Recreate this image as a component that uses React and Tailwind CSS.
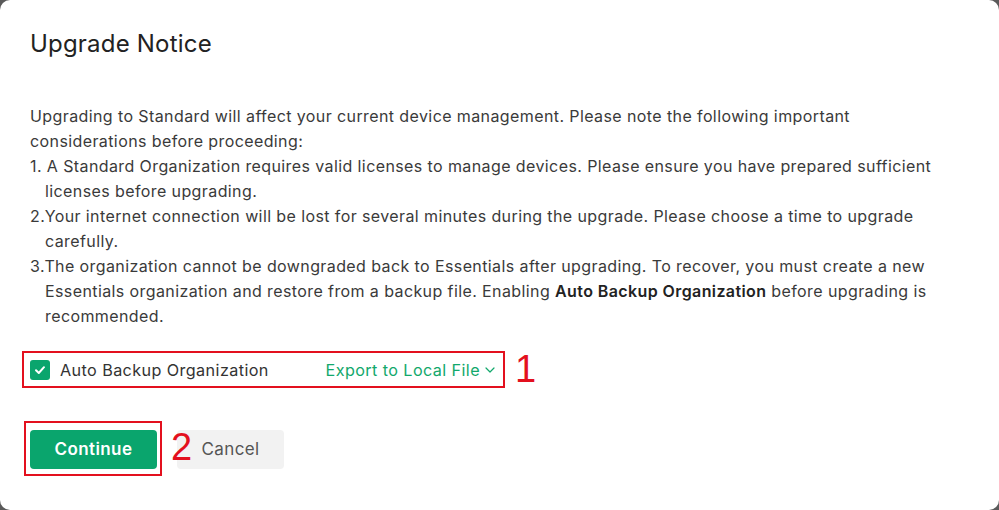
import React from "react";

export default function App() {
  const font = { fontFamily: 'Inter, "Noto Sans", sans-serif' };
  return (
    <div className="w-[999px] h-[510px] bg-[#5a5a5a] tracking-[0.4px]" style={font}>
      <div className="w-full h-full bg-white rounded-[10px] px-[30px] pt-[28px] flex flex-col">
        <h1 className="text-[24px] leading-[32px] text-[#222] font-normal tracking-[0.2px]">Upgrade Notice</h1>
        <div className="mt-[44px] text-[16px] leading-[25px] text-[#3a3a3a]">
          <p>
            Upgrading to Standard will affect your current device management. Please note the following important
            considerations before proceeding:
          </p>
          <p className="pl-[15px] -indent-[15px]">
            1. A Standard Organization requires valid licenses to manage devices. Please ensure you have prepared sufficient licenses before upgrading.
          </p>
          <p className="pl-[15px] -indent-[15px]">
            2.Your internet connection will be lost for several minutes during the upgrade. Please choose a time to upgrade carefully.
          </p>
          <p className="pl-[15px] -indent-[15px]">
            3.The organization cannot be downgraded back to Essentials after upgrading. To recover, you must create a new Essentials organization and restore from a backup file. Enabling{" "}
            <span className="font-semibold text-[#222]">Auto Backup Organization</span> before upgrading is recommended.
          </p>
        </div>

        <div className="relative mt-[29px] w-[465px] h-[24px] flex items-center justify-between">
          <div className="flex items-center gap-[10px]">
            <span className="w-[20px] h-[20px] rounded-[3px] bg-[#0aa56d] flex items-center justify-center">
              <svg width="12" height="12" viewBox="0 0 12 12" fill="none">
                <path d="M2 6.2 L4.8 9 L10 3.2" stroke="white" strokeWidth="2" strokeLinecap="round" strokeLinejoin="round" />
              </svg>
            </span>
            <span className="text-[16.2px] text-[#333]">Auto Backup Organization</span>
          </div>
          <div className="flex items-center gap-[5px] text-[16.2px] text-[#12a86c]">
            <span>Export to Local File</span>
            <svg width="10" height="6" viewBox="0 0 10 6" fill="none">
              <path d="M1 1 L5 5 L9 1" stroke="#12a86c" strokeWidth="1.2" strokeLinecap="round" strokeLinejoin="round" />
            </svg>
          </div>
          <div className="absolute left-[-8px] top-[-7px] w-[483px] h-[37px] border-2 border-[#e3101e] pointer-events-none" />
          <span
            className="absolute left-[485px] top-[-14px] text-[38px] leading-[50px] text-[#e3101e] tracking-normal"
            style={{ fontFamily: '"Liberation Sans", Arial, sans-serif' }}
          >
            1
          </span>
        </div>

        <div className="relative mt-[48px] flex items-center gap-[20px]">
          <button className="w-[127px] h-[39px] rounded-[4px] bg-[#0aa56d] text-white text-[17px] font-semibold">
            Continue
          </button>
          <button className="w-[107px] h-[39px] rounded-[4px] bg-[#f2f2f2] text-[#555] text-[17px]">
            Cancel
          </button>
          <div className="absolute left-[-6px] top-[-9px] w-[138px] h-[55px] border-2 border-[#e3101e] pointer-events-none" />
          <span
            className="absolute left-[141px] top-[-8px] text-[38px] leading-[50px] text-[#e3101e] tracking-normal"
            style={{ fontFamily: '"Liberation Sans", Arial, sans-serif' }}
          >
            2
          </span>
        </div>
      </div>
    </div>
  );
}
